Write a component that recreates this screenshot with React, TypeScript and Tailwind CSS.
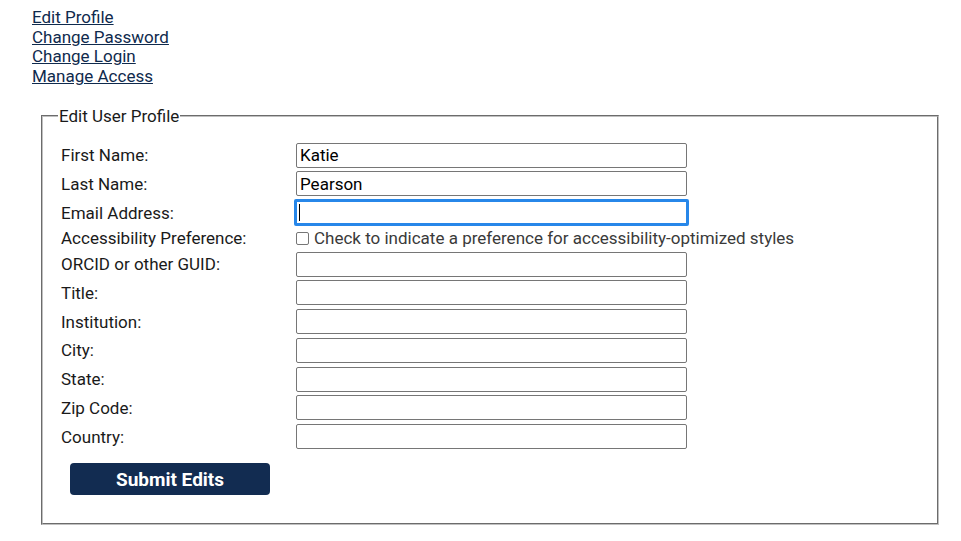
import React from "react";

const links = ["Edit Profile", "Change Password", "Change Login", "Manage Access"];

function TextRow({ label, value, focused }: { label: string; value?: string; focused?: boolean }) {
  return (
    <div className="flex h-[28.75px] items-center">
      <label className="w-[235px] shrink-0 text-[#1a1a1a]">{label}</label>
      {focused ? (
        <div className="relative">
          <input
            type="text"
            readOnly
            defaultValue=""
            className="box-border h-[27px] w-[395px] -ml-[2px] rounded-[2px] border-[3px] border-[#2787e9] bg-white px-[2px] text-[17px] text-black outline-none"
          />
          <span className="absolute left-[3px] top-[5px] h-[17px] w-px bg-black" />
        </div>
      ) : (
        <input
          type="text"
          readOnly
          defaultValue={value}
          className="box-border h-[25px] w-[391px] rounded-[2px] border border-[#767676] bg-white px-[3px] text-[17px] text-black outline-none"
        />
      )}
    </div>
  );
}

export default function App() {
  return (
    <div className="min-h-screen bg-white font-['Roboto','Noto_Sans',sans-serif] text-[17px] leading-[normal]">
      <div className="flex flex-col items-start pl-[32px] pt-[8px] leading-[19.7px]">
        {links.map(l => (
          <a key={l} href="#" className="text-[#0f2a4d] underline">
            {l}
          </a>
        ))}
      </div>
      <fieldset className="ml-[41px] mt-[19px] w-[898px] border-2 border-[#c0c0c0] [border-style:groove] pb-[28px] pl-[18px] pt-[15px]">
        <legend className="-ml-[3px] px-px text-[#1a1a1a]">Edit User Profile</legend>
        <TextRow label="First Name:" value="Katie" />
        <TextRow label="Last Name:" value="Pearson" />
        <TextRow label="Email Address:" focused />
        <div className="flex h-[22.75px] items-center">
          <label className="w-[235px] shrink-0 text-[#1a1a1a]">Accessibility Preference:</label>
          <label className="flex items-center text-[#3a3a3a]">
            <input type="checkbox" className="m-0 mr-[5px] h-[13px] w-[13px] appearance-none rounded-[2px] border border-[#767676] bg-white" />
            Check to indicate a preference for accessibility-optimized styles
          </label>
        </div>
        <TextRow label="ORCID or other GUID:" />
        <TextRow label="Title:" />
        <TextRow label="Institution:" />
        <TextRow label="City:" />
        <TextRow label="State:" />
        <TextRow label="Zip Code:" />
        <TextRow label="Country:" />
        <button
          type="button"
          className="ml-[9px] mt-[12px] h-[32px] w-[200px] rounded-[4px] bg-[#122c51] text-[19px] font-bold text-white"
        >
          Submit Edits
        </button>
      </fieldset>
    </div>
  );
}
